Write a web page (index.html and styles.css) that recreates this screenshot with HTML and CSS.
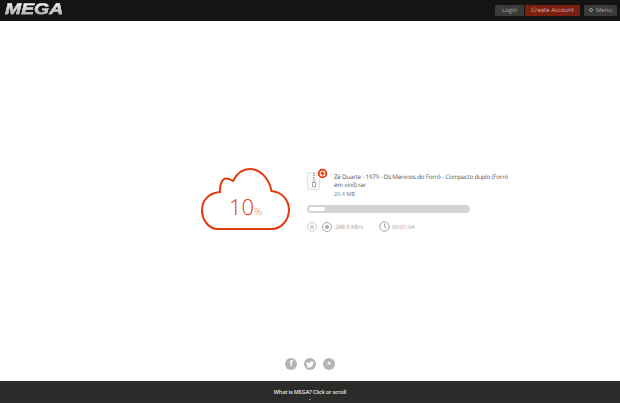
FILE: index.html
```html
<!DOCTYPE html>
<html lang="en">
<head>
<meta charset="utf-8">
<title>MEGA</title>
<link rel="stylesheet" href="styles.css">
</head>
<body>
<header class="topbar">
  <div class="logo">MEGA</div>
  <nav class="nav">
    <a class="btn btn-login">Login</a>
    <a class="btn btn-red">Create Account</a>
    <a class="btn btn-menu"><span class="gear"></span>Menu</a>
  </nav>
</header>
<main class="main">
  <div class="transfer">
    <div class="cloud">
      <svg class="cloud-svg" width="90" height="62" viewBox="0 0 90 62">
        <path d="M16.500 61H71C80 61 88 52 88 42C88 32 81 24 70.500 23C68 10 59 1 49 1C41 1 36 5 32 13C30 11.500 27.500 10.500 25 10.500C21 10.500 18.500 17 19 24C8 25 1 32 1 42C1 52 8 61 16.500 61Z"/>
      </svg>
      <div class="percent">10<span class="percent-sign">%</span></div>
    </div>
    <div class="details">
      <div class="file">
        <div class="file-icon">
          <svg width="21" height="26" viewBox="0 0 21 26">
            <path class="doc" d="M0.500 4.500H12.500V21.500H0.500Z"/>
            <path class="zip" d="M7 5V14"/>
            <path class="zip-pull" d="M5.500 14.500H8.500V19H5.500Z"/>
            <circle class="badge-halo" cx="15.500" cy="5.500" r="5.500"/>
            <circle class="badge" cx="15.500" cy="5.500" r="3.800"/>
            <path class="plus" d="M13.500 5.500H17.500M15.500 3.500V7.500"/>
          </svg>
        </div>
        <div class="file-text">
          <div class="file-name">Zé Duarte - 1979 - Os Meninos do Forró - Compacto duplo (Forró em vinil).rar</div>
          <div class="file-size">20.4 MB</div>
        </div>
      </div>
      <div class="progress"><div class="progress-fill"></div></div>
      <div class="stats">
        <span class="round-icon"><span class="pause"></span></span>
        <span class="round-icon dark"><span class="dot"></span></span>
        <span class="stat-text speed">288.9 KB/s</span>
        <svg class="clock" width="11" height="11" viewBox="0 0 11 11"><circle cx="5.500" cy="5.500" r="4.700"/><path d="M5.500 2.500V5.700L7.500 6.800"/></svg>
        <span class="stat-text">00:01:04</span>
      </div>
    </div>
  </div>
</main>
<div class="social">
  <span class="social-icon">f</span>
  <span class="social-icon">
    <svg width="8" height="7" viewBox="0 0 24 20"><path class="bird" d="M24 2.400c-.9.400-1.800.700-2.800.800 1-.6 1.800-1.600 2.200-2.700-1 .6-2 1-3.100 1.200C19.300.700 18 0 16.600 0c-2.700 0-4.900 2.200-4.900 4.900 0 .4 0 .8.100 1.100C7.700 5.800 4.100 3.900 1.700.900c-.4.700-.7 1.600-.7 2.500 0 1.700.9 3.200 2.200 4.100-.8 0-1.600-.2-2.200-.6v.1c0 2.400 1.700 4.400 3.900 4.800-.7.200-1.500.2-2.200.1.600 2 2.400 3.400 4.600 3.400C5.600 16.600 3 17.600.2 17.600H0C2.200 19 4.800 19.800 7.500 19.800c9.100 0 14-7.500 14-14v-.6c1-.7 1.800-1.600 2.500-2.800z"/></svg>
  </span>
  <span class="social-icon">+</span>
</div>
<footer class="footer">
  <span>What is MEGA? Click or scroll</span>
  <span class="footer-mark"></span>
</footer>
</body>
</html>
```

FILE: styles.css
```css
* { box-sizing: border-box; }
html, body { margin: 0; height: 100%; }
body {
  width: 620px;
  height: 403px;
  overflow: hidden;
  background: #fff;
  font-family: "Open Sans", "Liberation Sans", sans-serif;
  text-rendering: geometricPrecision;
  display: flex;
  flex-direction: column;
}
.topbar {
  height: 21px;
  flex: none;
  background: #161412;
  display: flex;
  align-items: center;
  justify-content: space-between;
  padding: 0 3px 0 5px;
}
.logo {
  font-family: "Liberation Sans", sans-serif;
  font-weight: 700;
  font-style: italic;
  font-size: 15.500px;
  line-height: 15px;
  transform: scaleX(1.25);
  transform-origin: left center;
  background: linear-gradient(#f4f4f4 15%, #a8a8a8 85%);
  -webkit-background-clip: text;
  background-clip: text;
  color: transparent;
  -webkit-text-stroke: 0.4px #cfcfcf;
  margin-top: -2px;
}
.nav { display: flex; margin-top: -1px; }
.btn {
  height: 11px;
  font-size: 6px;
  color: #a8a8a8;
  background: #3a3a38;
  border-radius: 1px;
  display: flex;
  align-items: center;
  justify-content: center;
}
.btn-login { width: 29px; margin-right: 1px; }
.btn-red { width: 55px; background: #7a2010; color: #d8b0a8; margin-right: 4px; }
.btn-menu { width: 33px; gap: 3px; }
.gear { width: 4px; height: 4px; border-radius: 50%; border: 1px solid #999; }
.main {
  flex: 1;
  display: flex;
  flex-direction: column;
  padding: 147px 0 0 201px;
}
.transfer { display: flex; gap: 16px; }
.cloud { position: relative; width: 90px; height: 62px; flex: none; }
.cloud-svg { display: block; }
.cloud-svg path { fill: none; stroke: #e03a12; stroke-width: 2; }
.percent {
  position: absolute;
  left: 28px;
  top: 24px;
  font-weight: 300;
  font-size: 22px;
  line-height: 30px;
  color: #e03a12;
  white-space: nowrap;
}
.percent-sign { font-size: 10px; color: #ea7a5c; }
.details { width: 205px; }
.file { display: flex; gap: 6px; height: 37px; }
.file-icon { width: 21px; flex: none; }
.file-icon svg { display: block; }
.doc { fill: #fafafa; stroke: #e2e2e2; stroke-width: 1; }
.zip { fill: none; stroke: #aaa; stroke-width: 2; stroke-dasharray: 1 1; }
.zip-pull { fill: none; stroke: #aaa; stroke-width: 1; }
.badge-halo { fill: #fff; }
.badge { fill: #fff; stroke: #e03a12; stroke-width: 1.800; }
.plus { stroke: #e03a12; stroke-width: 1.600; fill: none; }
.file-text { padding-top: 5px; width: 178px; }
.file-name { font-size: 6.200px; letter-spacing: -0.19px; line-height: 8px; color: #555; }
.file-size { font-size: 5.500px; line-height: 8px; color: #777; margin-top: 1px; }
.progress {
  width: 163px;
  height: 8px;
  background: #d4d4d4;
  border-radius: 4px;
  padding: 2px;
}
.progress-fill { width: 16px; height: 4px; background: #fff; border-radius: 2px; }
.stats { display: flex; align-items: center; margin-top: 8px; height: 11px; }
.round-icon {
  width: 10px;
  height: 10px;
  border: 1px solid #c8c8c8;
  border-radius: 50%;
  display: flex;
  align-items: center;
  justify-content: center;
  margin-right: 5px;
  flex: none;
}
.round-icon.dark { border-color: #aaa; margin-right: 3px; }
.pause { width: 4px; height: 4px; background: #d4d4d4; }
.dot { width: 4px; height: 4px; background: #aaa; border-radius: 50%; }
.stat-text { font-size: 6px; letter-spacing: -0.15px; color: #aaa; }
.speed { color: #b0a096; width: 31px; margin-right: 13px; }
.clock { margin-right: 2px; flex: none; }
.clock circle, .clock path { fill: none; stroke: #a0a0a0; stroke-width: 1; }
.social {
  flex: none;
  height: 28px;
  display: flex;
  justify-content: center;
  gap: 7px;
  padding-top: 5px;
}
.social-icon {
  width: 12px;
  height: 12px;
  border-radius: 50%;
  background: #b4b4b4;
  color: #fff;
  font-size: 8px;
  font-weight: 700;
  line-height: 12px;
  text-align: center;
  display: flex;
  align-items: center;
  justify-content: center;
}
.bird { fill: #fff; }
.footer {
  flex: none;
  height: 22px;
  background: #2b2b29;
  color: #e8e8e8;
  font-size: 5.500px;
  letter-spacing: -0.12px;
  font-weight: 600;
  display: flex;
  flex-direction: column;
  align-items: center;
  padding-top: 8px;
  gap: 3px;
  line-height: 7px;
}
.footer-mark { width: 2px; height: 1px; background: #777; }
```
